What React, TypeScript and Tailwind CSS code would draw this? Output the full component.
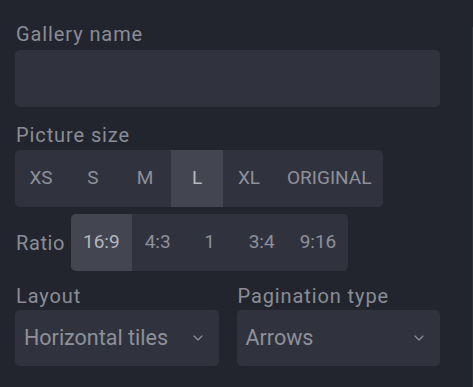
import { ChevronDown } from "lucide-react";

const sizes = ["XS", "S", "M", "L", "XL", "ORIGINAL"];
const ratios = ["16:9", "4:3", "1", "3:4", "9:16"];

const Segmented = ({ items, active }: { items: string[]; active: string }) => (
  <div className="flex h-[57px] overflow-hidden rounded-[5px] bg-[#30333e]">
    {items.map((item) => (
      <button
        key={item}
        className={
          item === active
            ? "flex min-w-[52px] items-center justify-center bg-[#434651] px-[12px] text-[19px] text-[#b4b6bd]"
            : "flex min-w-[52px] items-center justify-center px-[12px] text-[19px] text-[#8e9099]"
        }
      >
        {item}
      </button>
    ))}
  </div>
);

const Select = ({ value }: { value: string }) => (
  <div className="flex h-[56px] items-center justify-between rounded-[5px] bg-[#30333e] pl-[9px] pr-[13px]">
    <span className="text-[21.5px] text-[#8e9099]">{value}</span>
    <ChevronDown className="h-4 w-4 text-[#8e9099]" strokeWidth={1.75} />
  </div>
);

const App = () => {
  return (
    <div
      className="relative h-[387px] w-[473px] overflow-hidden bg-[#22252d] pl-[15px] pt-[22px]"
      style={{ fontFamily: "Roboto, 'Liberation Sans', sans-serif" }}
    >
      <div className="absolute bottom-0 right-0 top-[27px] w-px bg-[#30343e]" />
      <div className="w-[425px]">
        <p className="pl-px text-[20px] leading-[24px] tracking-[0.9px] text-[#8a8d96]">Gallery name</p>
        <div className="mt-[4px] h-[57px] rounded-[5px] bg-[#30333e]" />

        <p className="mt-[16px] pl-px text-[20px] leading-[24px] tracking-[0.9px] text-[#8a8d96]">Picture size</p>
        <div className="mt-[3px] flex">
          <Segmented items={sizes} active="L" />
        </div>

        <div className="mt-[7px] flex items-center gap-[6px]">
          <span className="pl-px text-[20px] tracking-[0.6px] text-[#8a8d96]">Ratio</span>
          <Segmented items={ratios} active="16:9" />
        </div>

        <div className="mt-[13px] grid grid-cols-2 gap-[18px]">
          <div>
            <p className="pl-px text-[20px] leading-[24px] tracking-[0.9px] text-[#8a8d96]">Layout</p>
            <div className="mt-[2px]">
              <Select value="Horizontal tiles" />
            </div>
          </div>
          <div>
            <p className="pl-px text-[20px] leading-[24px] tracking-[0.9px] text-[#8a8d96]">Pagination type</p>
            <div className="mt-[2px]">
              <Select value="Arrows" />
            </div>
          </div>
        </div>
      </div>
    </div>
  );
};

export default App;
